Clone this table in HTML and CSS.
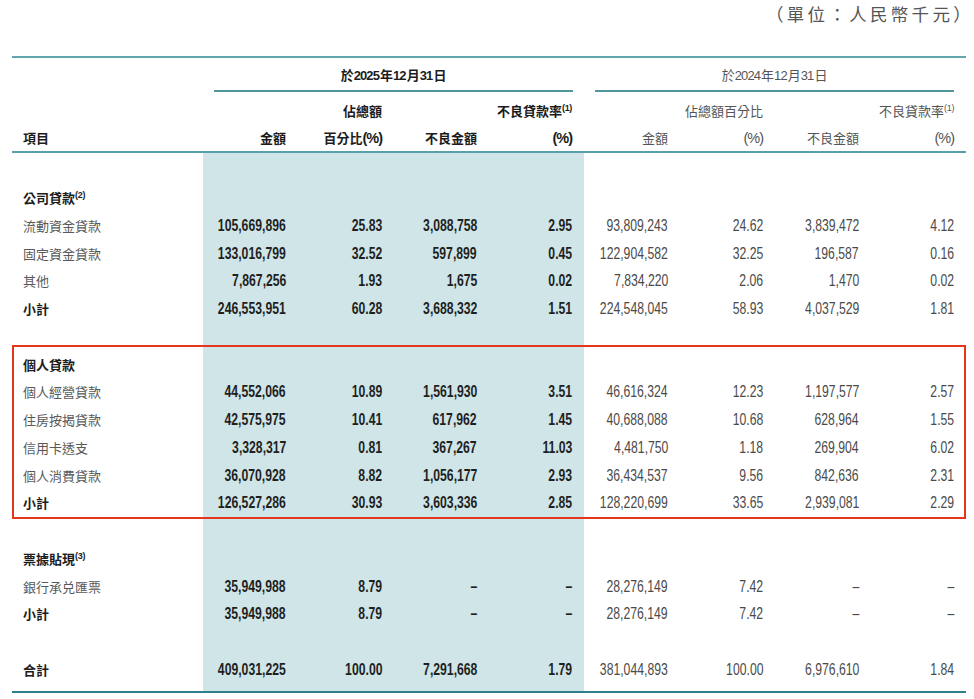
FILE: index.html
```html
<!DOCTYPE html>
<html lang="zh-Hant">
<head>
<meta charset="utf-8">
<title>貸款結構</title>
<link rel="stylesheet" href="styles.css">
</head>
<body>
<div class="unit">（單位：人民幣千元）</div>
<table class="loans">
  <colgroup>
    <col class="c-label"><col class="c1"><col class="c2"><col class="c3"><col class="c4"><col class="c5"><col class="c6"><col class="c7"><col class="c8">
  </colgroup>
  <thead>
    <tr class="grp-row">
      <th class="blank"></th>
      <th class="grp cur" colspan="4"><div class="grp-in">於<span class="d">2025</span>年<span class="d">12</span>月<span class="d">31</span>日</div></th>
      <th class="grp prev" colspan="4"><div class="grp-in">於<span class="d">2024</span>年<span class="d">12</span>月<span class="d">31</span>日</div></th>
    </tr>
    <tr class="col-row">
      <th class="item">項目</th>
      <th class="cur p4">金額</th>
      <th class="cur p4">佔總額<br>百分比<span class="pc">(%)</span></th>
      <th class="cur p4">不良金額</th>
      <th class="cur p12">不良貸款率<span class="note">(1)</span><br><span class="pc">(%)</span></th>
      <th class="prev p4">金額</th>
      <th class="prev p4">佔總額百分比<br><span class="pc">(%)</span></th>
      <th class="prev p4">不良金額</th>
      <th class="prev p12">不良貸款率<span class="note">(1)</span><br><span class="pc">(%)</span></th>
    </tr>
  </thead>
  <tbody>
    <tr class="sp sp-top"><td></td><td></td><td></td><td></td><td></td><td></td><td></td><td></td><td></td></tr>
    <tr class="head"><td>公司貸款<span class="note">(2)</span></td><td></td><td></td><td></td><td></td><td></td><td></td><td></td><td></td></tr>
    <tr><td>流動資金貸款</td><td><span class="v">105,669,896</span></td><td><span class="v">25.83</span></td><td><span class="v">3,088,758</span></td><td><span class="v">2.95</span></td><td><span class="v">93,809,243</span></td><td><span class="v">24.62</span></td><td><span class="v">3,839,472</span></td><td><span class="v">4.12</span></td></tr>
    <tr><td>固定資金貸款</td><td><span class="v">133,016,799</span></td><td><span class="v">32.52</span></td><td><span class="v">597,899</span></td><td><span class="v">0.45</span></td><td><span class="v">122,904,582</span></td><td><span class="v">32.25</span></td><td><span class="v">196,587</span></td><td><span class="v">0.16</span></td></tr>
    <tr><td>其他</td><td><span class="v">7,867,256</span></td><td><span class="v">1.93</span></td><td><span class="v">1,675</span></td><td><span class="v">0.02</span></td><td><span class="v">7,834,220</span></td><td><span class="v">2.06</span></td><td><span class="v">1,470</span></td><td><span class="v">0.02</span></td></tr>
    <tr class="sub"><td>小計</td><td><span class="v">246,553,951</span></td><td><span class="v">60.28</span></td><td><span class="v">3,688,332</span></td><td><span class="v">1.51</span></td><td><span class="v">224,548,045</span></td><td><span class="v">58.93</span></td><td><span class="v">4,037,529</span></td><td><span class="v">1.81</span></td></tr>
    <tr class="sp sp-a"><td></td><td></td><td></td><td></td><td></td><td></td><td></td><td></td><td></td></tr>
  </tbody>
  <tbody class="focus">
    <tr class="head first"><td>個人貸款</td><td></td><td></td><td></td><td></td><td></td><td></td><td></td><td></td></tr>
    <tr><td>個人經營貸款</td><td><span class="v">44,552,066</span></td><td><span class="v">10.89</span></td><td><span class="v">1,561,930</span></td><td><span class="v">3.51</span></td><td><span class="v">46,616,324</span></td><td><span class="v">12.23</span></td><td><span class="v">1,197,577</span></td><td><span class="v">2.57</span></td></tr>
    <tr><td>住房按揭貸款</td><td><span class="v">42,575,975</span></td><td><span class="v">10.41</span></td><td><span class="v">617,962</span></td><td><span class="v">1.45</span></td><td><span class="v">40,688,088</span></td><td><span class="v">10.68</span></td><td><span class="v">628,964</span></td><td><span class="v">1.55</span></td></tr>
    <tr><td>信用卡透支</td><td><span class="v">3,328,317</span></td><td><span class="v">0.81</span></td><td><span class="v">367,267</span></td><td><span class="v">11.03</span></td><td><span class="v">4,481,750</span></td><td><span class="v">1.18</span></td><td><span class="v">269,904</span></td><td><span class="v">6.02</span></td></tr>
    <tr><td>個人消費貸款</td><td><span class="v">36,070,928</span></td><td><span class="v">8.82</span></td><td><span class="v">1,056,177</span></td><td><span class="v">2.93</span></td><td><span class="v">36,434,537</span></td><td><span class="v">9.56</span></td><td><span class="v">842,636</span></td><td><span class="v">2.31</span></td></tr>
    <tr class="sub last"><td>小計</td><td><span class="v">126,527,286</span></td><td><span class="v">30.93</span></td><td><span class="v">3,603,336</span></td><td><span class="v">2.85</span></td><td><span class="v">128,220,699</span></td><td><span class="v">33.65</span></td><td><span class="v">2,939,081</span></td><td><span class="v">2.29</span></td></tr>
  </tbody>
  <tbody>
    <tr class="sp sp-b"><td></td><td></td><td></td><td></td><td></td><td></td><td></td><td></td><td></td></tr>
    <tr class="head"><td>票據貼現<span class="note">(3)</span></td><td></td><td></td><td></td><td></td><td></td><td></td><td></td><td></td></tr>
    <tr><td>銀行承兑匯票</td><td><span class="v">35,949,988</span></td><td><span class="v">8.79</span></td><td><span class="v">–</span></td><td><span class="v">–</span></td><td><span class="v">28,276,149</span></td><td><span class="v">7.42</span></td><td><span class="v">–</span></td><td><span class="v">–</span></td></tr>
    <tr class="sub"><td>小計</td><td><span class="v">35,949,988</span></td><td><span class="v">8.79</span></td><td><span class="v">–</span></td><td><span class="v">–</span></td><td><span class="v">28,276,149</span></td><td><span class="v">7.42</span></td><td><span class="v">–</span></td><td><span class="v">–</span></td></tr>
    <tr class="sp sp-c"><td></td><td></td><td></td><td></td><td></td><td></td><td></td><td></td><td></td></tr>
    <tr class="sub total"><td>合計</td><td><span class="v">409,031,225</span></td><td><span class="v">100.00</span></td><td><span class="v">7,291,668</span></td><td><span class="v">1.79</span></td><td><span class="v">381,044,893</span></td><td><span class="v">100.00</span></td><td><span class="v">6,976,610</span></td><td><span class="v">1.84</span></td></tr>
  </tbody>
</table>
</body>
</html>
```

FILE: styles.css
```css
html, body {
  margin: 0;
  padding: 0;
  background: #ffffff;
}

body {
  font-family: "Noto Sans CJK TC", "Noto Sans CJK SC", sans-serif;
  color: #555555;
}

.unit {
  text-align: right;
  font-size: 17.5px;
  line-height: 27px;
  letter-spacing: 3.3px;
  color: #555555;
  padding-right: 0;
}

.loans {
  margin: 29px 0 0 12px;
  width: 954px;
  table-layout: fixed;
  border-collapse: separate;
  border-spacing: 0;
}

.c-label { width: 191px; }
.c1 { width: 87px; }
.c2 { width: 96px; }
.c3 { width: 95px; }
.c4 { width: 103px; }
.c5 { width: 88px; }
.c6 { width: 95px; }
.c7 { width: 96px; }
.c8 { width: 103px; }

/* ---------- header ---------- */
.loans th {
  font-weight: 400;
  padding: 0;
  font-family: "Noto Sans CJK TC", "Noto Sans CJK SC", sans-serif;
}

.d,
.pc {
  font-family: "Liberation Sans", sans-serif;
  line-height: 1;
}

.d {
  letter-spacing: -0.9px;
  margin-right: 1px;
}

.pc {
  font-size: 14.5px;
  letter-spacing: -1px;
}

.grp-row th {
  border-top: 2px solid #62a5ad;
  font-size: 13px;
}

.grp-row .grp.cur {
  padding: 0 11px;
  color: #1c1c1c;
  font-weight: 700;
}

.grp-row .grp.prev {
  padding: 0 12px 0 11px;
  color: #555555;
}

.grp-in {
  padding: 7px 0 5px;
  line-height: 20px;
  height: 20px;
  border-bottom: 2px solid #4e979f;
  text-align: center;
}

.col-row th {
  vertical-align: bottom;
  text-align: right;
  font-size: 13px;
  line-height: 27px;
  padding-top: 5px;
  border-bottom: 2px solid #5aa0a9;
}

.col-row th.item {
  text-align: left;
  padding-left: 11px;
  font-weight: 700;
  color: #1c1c1c;
}

.col-row th.cur {
  font-weight: 700;
  color: #1c1c1c;
}

.col-row th.prev {
  color: #555555;
}

.p4 { padding-right: 4px !important; }
.p12 { padding-right: 12px !important; }

.note {
  font-family: "Liberation Sans", sans-serif;
  font-size: 9px;
  line-height: 0;
  vertical-align: 5px;
  letter-spacing: -0.3px;
}

/* ---------- body ---------- */
.loans td {
  padding: 0 4px 0 0;
  line-height: 27.75px;
  text-align: right;
  white-space: nowrap;
  font-family: "Liberation Sans", sans-serif;
  font-size: 16.5px;
  color: #4a4a4a;
}

.v {
  display: inline-block;
  margin-left: -24px;
  transform: scaleX(0.74);
  transform-origin: 100% 50%;
}

.loans td:first-child {
  text-align: left;
  padding-left: 11px;
  font-family: "Noto Sans CJK TC", "Noto Sans CJK SC", sans-serif;
  font-size: 13px;
  color: #595959;
}

.loans td:nth-child(5),
.loans td:nth-child(9) {
  padding-right: 12px;
}

.loans tbody td:nth-child(n+2):nth-child(-n+5) {
  background: #cfe5e7;
  font-weight: 700;
  color: #1f1f1f;
}

.loans tr.head td:first-child,
.loans tr.sub td:first-child {
  font-weight: 700;
  color: #1c1c1c;
}

.loans tr.sp td {
  padding: 0;
  line-height: 0;
}

.sp-top td { height: 31px; }
.sp-a td { height: 22.25px; }
.sp-b td { height: 25.75px; }
.sp-c td { height: 27.75px; }

.focus {
  outline: 2px solid #e4361f;
  outline-offset: -2px;
}

.focus tr.first td { padding-top: 5.5px; }
.focus tr.last td { padding-bottom: 2px; }

.loans tr.total td {
  padding-bottom: 7.5px;
  border-bottom: 2px solid #2d7f89;
}
```
